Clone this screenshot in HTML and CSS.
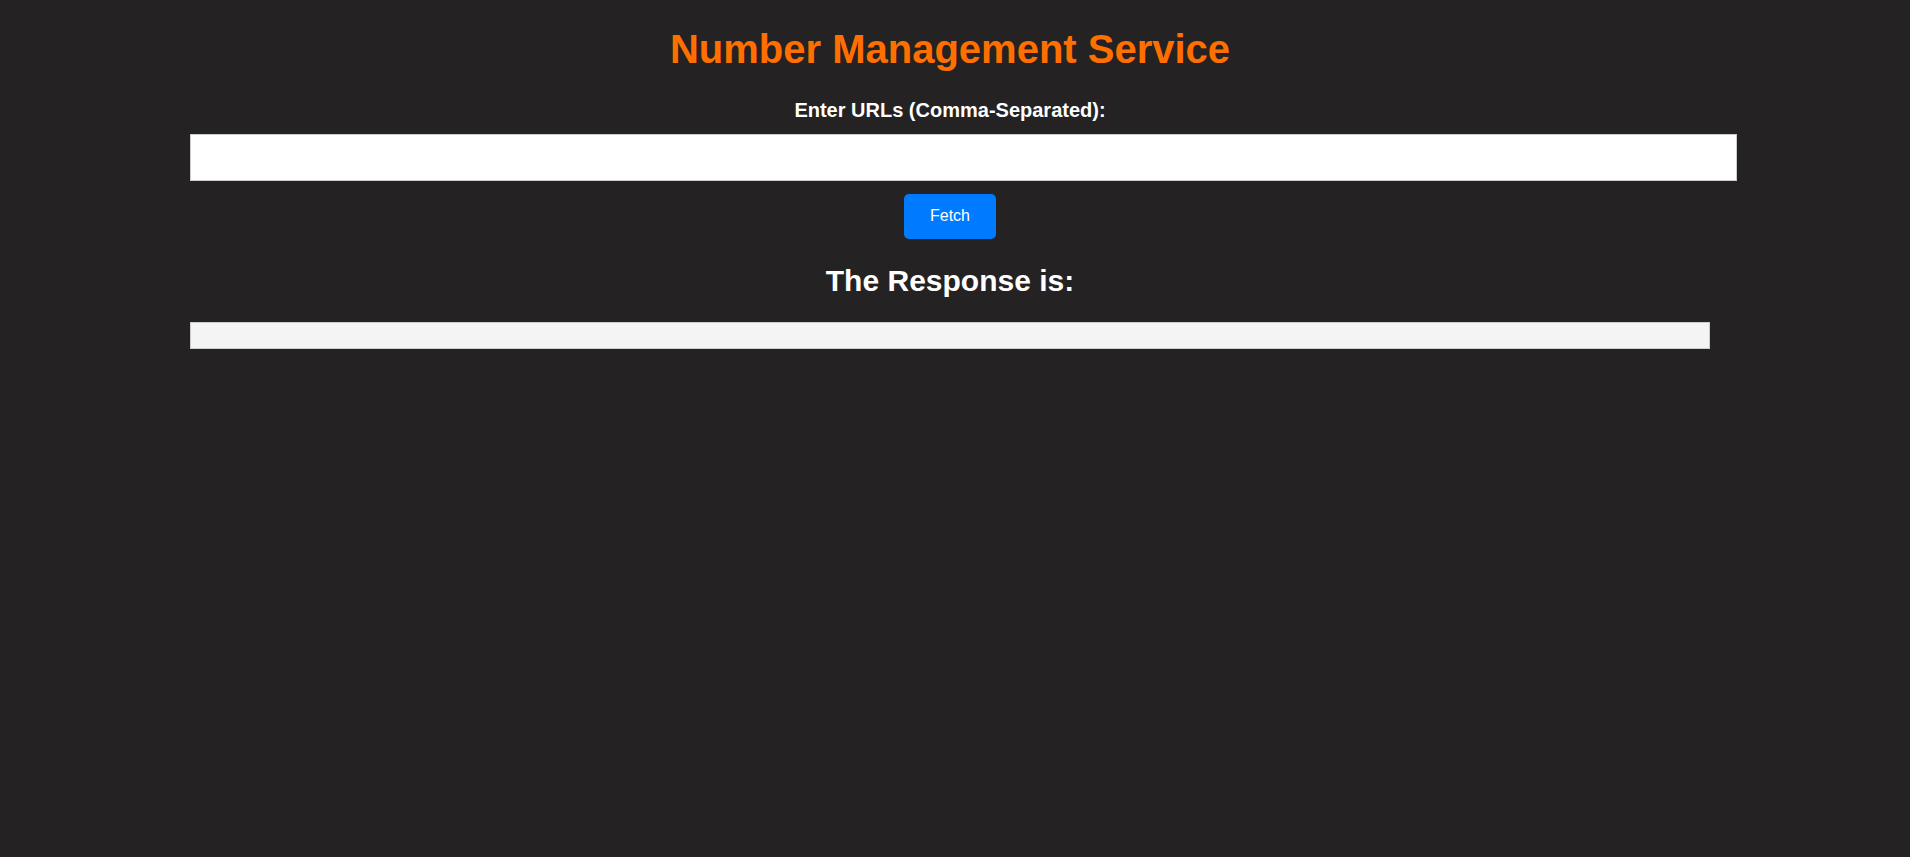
FILE: index.html
```html
<!DOCTYPE html>
<html lang="en">
<head>
<meta charset="utf-8">
<title>Number Management Service</title>
<link rel="stylesheet" href="styles.css">
</head>
<body>
<main class="app">
  <h1 class="title">Number Management Service</h1>
  <label class="label" for="urls">Enter URLs (Comma-Separated):</label>
  <input class="url-input" id="urls" type="text">
  <div class="actions">
    <button class="fetch-btn" type="button">Fetch</button>
  </div>
  <h2 class="response-title">The Response is:</h2>
  <div class="response-box"></div>
</main>
</body>
</html>
```
FILE: styles.css
```css
html, body {
  margin: 0;
  padding: 0;
  background: #242223;
  height: 100%;
}

body {
  font-family: "Liberation Sans", Arial, sans-serif;
  color: #ffffff;
}

.app {
  width: 1520px;
  margin-left: 190px;
  display: flex;
  flex-direction: column;
  align-items: center;
}

.title {
  margin: 27px 0 0;
  font-size: 40px;
  font-weight: bold;
  line-height: 45px;
  color: #ff6f00;
  text-align: center;
}

.label {
  margin-top: 27px;
  font-size: 20px;
  font-weight: bold;
  line-height: 22px;
  color: #ffffff;
}

.url-input {
  align-self: flex-start;
  box-sizing: border-box;
  margin-top: 13px;
  width: 1547px;
  height: 47px;
  border: 1px solid #cccccc;
  background: #ffffff;
  padding: 0 12px;
  font-size: 16px;
  font-family: "Liberation Sans", Arial, sans-serif;
}

.actions {
  margin-top: 13px;
}

.fetch-btn {
  box-sizing: border-box;
  width: 92px;
  height: 45px;
  border: none;
  border-radius: 5px;
  background: #007bff;
  color: #ffffff;
  font-family: "Liberation Sans", Arial, sans-serif;
  font-size: 16px;
  padding: 0 0 2px;
  cursor: pointer;
}

.response-title {
  margin: 25px 0 0;
  font-size: 30px;
  font-weight: bold;
  line-height: 34px;
  color: #ffffff;
}

.response-box {
  align-self: stretch;
  box-sizing: border-box;
  margin-top: 24px;
  height: 27px;
  background: #f4f4f4;
  border: 1px solid #cccccc;
}
```
